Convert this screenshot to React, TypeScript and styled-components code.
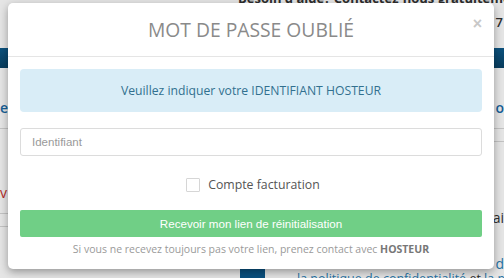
import styled, { createGlobalStyle } from "styled-components";

const GlobalStyle = createGlobalStyle`
  html, body {
    margin: 0;
    padding: 0;
    width: 504px;
    height: 278px;
    overflow: hidden;
    background: #ffffff;
    font-family: "Open Sans", "Liberation Sans", sans-serif;
  }
`;

const Page = styled.div`
  position: relative;
  width: 504px;
  height: 278px;
  overflow: hidden;
  background: #ffffff;
`;

const TopLine = styled.div`
  height: 48px;
  display: flex;
  flex-direction: column;
  padding-left: 238px;
  font-size: 13px;
  color: #333;
`;

const TopHelp = styled.div`
  margin-top: -11px;
  font-weight: 700;
  white-space: nowrap;
`;

const TopPhone = styled.div`
  margin-top: 6px;
  align-self: flex-end;
  padding-right: 1px;
  font-weight: 600;
`;

const NavBar = styled.div`
  height: 20px;
  background: linear-gradient(#0e5b8c, #0a4468);
`;

const Content = styled.div`
  display: flex;
  justify-content: space-between;
  padding-top: 30px;
`;

const SideCol = styled.div<{ $align: "left" | "right" }>`
  display: flex;
  flex-direction: column;
  align-items: ${(p) => (p.$align === "left" ? "flex-start" : "flex-end")};
  width: 60px;
  font-size: 14px;
`;

const SideLink = styled.div`
  color: #1a6aa8;
  font-weight: 600;
  height: 24px;
`;

const SideRule = styled.div`
  width: 100%;
  border-top: 1px solid #d8d8d8;
  margin: 6px 0;
`;

const SideText = styled.div<{ $tone: "red" | "dark" | "link"; $gap: number }>`
  color: ${(p) =>
    p.$tone === "red" ? "#c9302c" : p.$tone === "link" ? "#2a7fb8" : "#333"};
  margin-top: ${(p) => p.$gap}px;
  height: 24px;
`;

const BottomStrip = styled.div`
  position: absolute;
  left: 240px;
  bottom: 0;
  display: flex;
  align-items: flex-end;
  gap: 32px;
  font-size: 12.5px;
  color: #2a7fb8;
  white-space: nowrap;

  span {
    text-decoration: underline;
    margin-bottom: -9px;
  }

  em {
    font-style: normal;
    color: #333;
    text-decoration: none;
  }
`;

const BlueSquare = styled.div`
  flex: none;
  width: 25px;
  height: 15px;
  background: #0c5a8e;
`;

const Backdrop = styled.div`
  position: absolute;
  inset: 0;
  background: rgba(0, 0, 0, 0.1);
`;

const Modal = styled.div`
  position: absolute;
  left: 8px;
  top: 3px;
  width: 486px;
  height: 266px;
  background: #fff;
  border-radius: 5px;
  box-shadow: 0 3px 9px rgba(0, 0, 0, 0.35);
  display: flex;
  flex-direction: column;
`;

const Header = styled.div`
  position: relative;
  height: 53px;
  border-bottom: 1px solid #e5e5e5;
  display: flex;
  align-items: center;
  justify-content: center;
`;

const Title = styled.h4`
  margin: 0;
  font-family: "Open Sans", sans-serif;
  font-weight: 400;
  font-size: 19.3px;
  color: #8a8a8a;
`;

const Close = styled.span`
  position: absolute;
  right: 12px;
  top: 12px;
  font-family: "Liberation Sans", sans-serif;
  font-weight: 700;
  font-size: 16px;
  color: #c8c8c8;
`;

const Body = styled.div`
  padding: 12px 12px 0;
  display: flex;
  flex-direction: column;
`;

const Alert = styled.div`
  height: 43px;
  background: #d9edf7;
  border-radius: 4px;
  color: #31708f;
  font-size: 12.2px;
  display: flex;
  align-items: center;
  justify-content: center;
`;

const Input = styled.input`
  margin-top: 16px;
  height: 28px;
  box-sizing: border-box;
  border: 1px solid #dcdcdc;
  border-radius: 3px;
  padding: 0 11px;
  font-family: "Liberation Sans", sans-serif;
  font-size: 11.5px;
  outline: none;

  &::placeholder {
    color: #9a9a9a;
  }
`;

const CheckRow = styled.label`
  margin-top: 20px;
  display: flex;
  align-items: center;
  justify-content: center;
  gap: 8px;
  font-size: 12.3px;
  color: #555;
  height: 17px;
`;

const Box = styled.span`
  width: 12px;
  height: 12px;
  border: 1px solid #d6d6d6;
  border-radius: 1px;
  background: #fff;
  margin-left: 4px;
`;

const Button = styled.button`
  margin-top: 17px;
  height: 27px;
  border: none;
  border-radius: 2px;
  background: #70cf86;
  color: #fff;
  font-family: "Liberation Sans", sans-serif;
  font-size: 11.6px;
  cursor: pointer;
`;

const Footer = styled.p`
  margin: 5px 0 0;
  text-align: center;
  font-size: 10.5px;
  color: #9a9a9a;

  b {
    color: #777;
    font-weight: 700;
  }
`;

export default function App() {
  return (
    <Page>
      <GlobalStyle />
      <TopLine>
        <TopHelp>Besoin d'aide? Contactez-nous gratuitement</TopHelp>
        <TopPhone>7</TopPhone>
      </TopLine>
      <NavBar />
      <Content>
        <SideCol $align="left">
          <SideLink>e</SideLink>
          <SideRule />
          <SideText $tone="red" $gap={48}>
            v
          </SideText>
          <SideRule />
          <SideRule />
        </SideCol>
        <SideCol $align="right">
          <SideLink>o</SideLink>
          <SideRule />
          <SideRule />
          <SideText $tone="dark" $gap={60}>
            ai
          </SideText>
          <SideText $tone="link" $gap={22}>
            d
          </SideText>
        </SideCol>
      </Content>
      <BottomStrip>
        <BlueSquare />
        <span>
          la politique de confidentialité <em>et</em> la p
        </span>
      </BottomStrip>
      <Backdrop />
      <Modal>
        <Header>
          <Title>MOT DE PASSE OUBLIÉ</Title>
          <Close>×</Close>
        </Header>
        <Body>
          <Alert>Veuillez indiquer votre IDENTIFIANT HOSTEUR</Alert>
          <Input placeholder="Identifiant" />
          <CheckRow>
            <Box />
            Compte facturation
          </CheckRow>
          <Button>Recevoir mon lien de réinitialisation</Button>
          <Footer>
            Si vous ne recevez toujours pas votre lien, prenez contact avec{" "}
            <b>HOSTEUR</b>
          </Footer>
        </Body>
      </Modal>
    </Page>
  );
}
